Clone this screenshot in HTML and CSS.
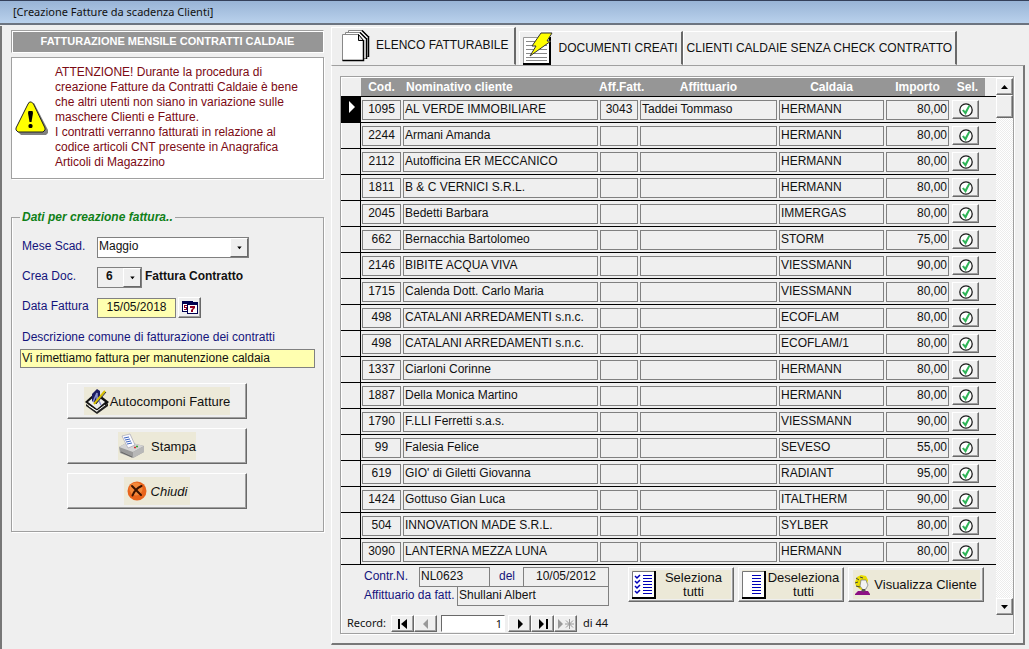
FILE: index.html
```html
<!DOCTYPE html>
<html lang="it">
<head>
  <meta charset="UTF-8" />
  <meta name="viewport" content="width=device-width, initial-scale=1.0"/>
  <title>Creazione Fatture da scadenza Clienti</title>
  <link rel="stylesheet" href="styles.css">
</head>
<body>

  <svg class="defs" aria-hidden="true">
    <symbol id="check" viewBox="0 0 14 14">
      <circle cx="7" cy="7" r="6.2" fill="#fff" stroke="#1c1c1c" stroke-width="1.3"/>
      <path d="M3 7.4l1.8-.8 1.3 1.7L9.6 2.2l1.6.8-4.500 9z" fill="#2fb457"/>
    </symbol>
    <symbol id="down" viewBox="0 0 7 4">
      <path d="M0 0h7L3.5 4z"/>
    </symbol>
  </svg>

  <header class="titlebar">[Creazione Fatture da scadenza Clienti]</header>

  <main>
    <section class="side">
      <h1>FATTURAZIONE MENSILE CONTRATTI CALDAIE</h1>

      <div class="warning">
        <svg width="34" height="34" viewBox="0 0 34 34">
          <path d="M17 3l2-1 14 27v3l-2 2H6l-3-3z" fill="#808080"/>
          <path d="M14.5 1h2l2 2L30 27v2l-2 2H3l-2-2v-2L13 3z" fill="#ff0" stroke="#222" stroke-width="1"/>
          <path d="M13.500 10h4l.5 2-1.500 9h-2L13 12z"/>
          <rect x="13.500" y="23" width="4" height="4" rx="1.500"/>
        </svg>
        <p>ATTENZIONE! Durante la procedura di<br>
          creazione Fatture da Contratti Caldaie è bene<br>
          che altri utenti non siano in variazione sulle<br>
          maschere Clienti e Fatture.<br>
          I contratti verranno fatturati in relazione al<br>
          codice articoli CNT presente in Anagrafica<br>
          Articoli di Magazzino</p>
      </div>

      <fieldset class="dati">
        <legend>Dati per creazione fattura..</legend>

        <div class="field">
          <label for="mese">Mese Scad.</label>
          <span class="combo combo-mese">
            <select id="mese"><option>Maggio</option></select>
            <svg width="18" height="18" viewBox="0 0 18 18"><path d="M7 8h5L9.500 11z"/></svg>
          </span>
        </div>
        <div class="field">
          <label for="doc">Crea Doc.</label>
          <span class="combo combo-doc">
            <select id="doc"><option>6</option></select>
            <svg width="18" height="18" viewBox="0 0 18 18"><path d="M7 8h5L9.500 11z"/></svg>
          </span>
          <strong>Fattura Contratto</strong>
        </div>
        <div class="field">
          <label for="data">Data Fattura</label>
          <input id="data" class="box yellow date" type="text" value="15/05/2018">
          <button class="raised cal" type="button" aria-label="Calendario">
            <svg width="16" height="15" viewBox="0 0 16 15">
              <path d="M0 1h11v11H0z" fill="#000050"/>
              <path d="M1 4h5v7H1z" fill="#fff"/>
              <path d="M2 5h3v1H3v1h2v3H2V9h2V8H2z" fill="#900020"/>
              <path d="M5 2h11v12H5z" fill="#000050"/>
              <path d="M6 5h9v8H6z" fill="#fff"/>
              <path d="M8 6h5v2l-2 2v2H9v-2l2-2H8z" fill="#900020"/>
            </svg>
          </button>
        </div>
        <label class="desc-label" for="desc">Descrizione comune di fatturazione dei contratti</label>
        <input id="desc" class="box yellow desc" type="text" value="Vi rimettiamo fattura per manutenzione caldaia">

        <div class="actions">
          <button class="raised big" type="button">
            <span class="face">
              <svg width="26" height="26" viewBox="0 0 26 26">
                <path d="M1 14L12 4l13 10-11 10z" fill="#111"/>
                <path d="M4 14l8-7 9 7-8 7z" fill="#eee"/>
                <path d="M2 16l11 8 11-9v3L13 26 2 18z" fill="#222"/>
                <path d="M5 18l8 5 8-6" fill="none" stroke="#fff" stroke-width="1"/>
                <path d="M8 6l5-5 3 2v8l-4 5-4-3z" fill="#1c1c60"/>
                <path d="M9 14l4-9v8M13 9l4 8" fill="none" stroke="#8890d0" stroke-width="1.500"/>
                <path d="M10 16L21 3" stroke="#d8c000" stroke-width="2"/>
                <path d="M12 16L22 4" stroke="#333" stroke-width="1"/>
              </svg>Autocomponi Fatture
            </span>
          </button>
          <button class="raised big" type="button">
            <span class="face stampa">
              <svg width="28" height="26" viewBox="0 0 28 26">
                <path d="M1 14l9-5 16 4v6l-11 6L2 20z" fill="#9a9a9a"/>
                <path d="M1 14l9-5 16 4-11 6z" fill="#d4d4d4"/>
                <path d="M15 19l11-6v6l-11 6z" fill="#b8b8b8"/>
                <path d="M4 3l8-2 5 11-7 3z" fill="#fafaff" stroke="#99a" stroke-width=".6"/>
                <path d="M6 5l5-1M7 7l5-1M8 9l5-1M9 11l5-1" stroke="#4068c0" stroke-width="1"/>
                <path d="M18 13.500h2" stroke="#30a030" stroke-width="1.500"/>
                <path d="M16 14.500h2" stroke="#d03030" stroke-width="1.500"/>
                <path d="M3 19l11 5" stroke="#666" stroke-width="1"/>
              </svg>Stampa
            </span>
          </button>
          <button class="raised big" type="button">
            <span class="face chiudi">
              <svg width="20" height="20" viewBox="0 0 20 20">
                <circle cx="10" cy="10" r="9.500" fill="#e8641c"/>
                <circle cx="9" cy="8" r="6.500" fill="#f5893a"/>
                <path d="M5 5q3 3 9 9M14.500 5Q8 8 5.500 14.500" fill="none" stroke="#3a1200" stroke-width="2" stroke-linecap="round"/>
              </svg>Chiudi
            </span>
          </button>
        </div>
      </fieldset>
    </section>

    <section class="content">
      <nav class="tabs">
        <button class="tab active" type="button">
          <svg width="28" height="33" viewBox="0 0 28 33">
            <path d="M6.500 1.500h14l6 6v20h-20z" fill="#fff" stroke="#888"/>
            <path d="M3.500 3.500h15l6 6v20h-21z" fill="#fff" stroke="#888"/>
            <path d="M.5 5.500h16l5 6v20H.5z" fill="#fff" stroke="#888"/>
            <path d="M21.500 11v20.500H.5M24.500 9v21M26.500 7v21" fill="none" stroke="#000" stroke-width="1.500"/>
            <path d="M20 1.500l6 6M18 3.500l6 6" stroke="#000" stroke-width="1.500"/>
            <path d="M16.500 5.500l5 6h-5z" fill="#ddd" stroke="#000"/>
          </svg>
          ELENCO FATTURABILE
        </button>
        <button class="tab" type="button">
          <svg width="30" height="33" viewBox="0 0 30 33">
            <path d="M1 5h26v27H1z" fill="#fff"/>
            <path d="M.5 32V5.500H27" fill="none" stroke="#999"/>
            <path d="M0 32h27V5" fill="none" stroke="#000" stroke-width="2"/>
            <path d="M3 9.500h21M3 13.500h21M3 17.500h21M3 21.500h21M3 25.500h21M3 28.500h21" stroke="#888"/>
            <path d="M18 1h11l-5 8h4L7 24l6-10H9z" fill="#ff0" stroke="#333"/>
          </svg>
          DOCUMENTI CREATI
        </button>
        <button class="tab" type="button">CLIENTI CALDAIE SENZA CHECK CONTRATTO</button>
      </nav>

      <div class="pane">
        <div class="subform">
          <div class="sheet">
            <div class="sheet-main">
              <table>
                <colgroup>
                  <col class="c-rec"><col class="c-cod"><col><col class="c-af"><col class="c-aff">
                  <col class="c-cal"><col class="c-imp"><col class="c-sel"><col class="c-end">
                </colgroup>
                <thead>
                  <tr><td></td><th>Cod.</th><th class="left">Nominativo cliente</th><th class="aff-fatt">Aff.Fatt.</th><th>Affittuario</th><th>Caldaia</th><th>Importo</th><th>Sel.</th><td></td></tr>
                </thead>
                <tbody id="rows"></tbody>
              </table>

              <div class="detail">
                <div class="detail-fields">
                  <div class="line">
                    <label for="contr">Contr.N.</label>
                    <input id="contr" class="box" type="text" value="NL0623" readonly>
                    <label for="del">del</label>
                    <input id="del" class="box date" type="text" value="10/05/2012" readonly>
                  </div>
                  <div class="line">
                    <label for="aff">Affittuario da fatt.</label>
                    <input id="aff" class="box" type="text" value="Shullani Albert" readonly>
                  </div>
                </div>
                <button class="raised tool" type="button">
                  <span class="face">
                    <svg width="24" height="28" viewBox="0 0 24 28">
                      <path d="M.5 .5h22v26H.5z" fill="#fff" stroke="#777"/>
                      <path d="M0 27h23V0" fill="none" stroke="#000" stroke-width="2"/>
                      <path d="M11 4.500h9M11 7.500h9M11 10.500h9M11 13.500h9M11 16.500h9M11 19.500h9M11 22.500h9" stroke="#0000b8"/>
                      <path d="M3 5l2 2 3-3M3 10l2 2 3-3M3 15l2 2 3-3M3 20l2 2 3-3" fill="none" stroke="#0000b8" stroke-width="1.500"/>
                    </svg>
                    <span>Seleziona<br>tutti</span>
                  </span>
                </button>
                <button class="raised tool" type="button">
                  <span class="face">
                    <svg width="24" height="28" viewBox="0 0 24 28">
                      <path d="M.5 .5h22v26H.5z" fill="#fff" stroke="#777"/>
                      <path d="M0 27h23V0" fill="none" stroke="#000" stroke-width="2"/>
                      <path d="M10 4.500h9M10 7.500h9M10 10.500h9M10 13.500h9M10 16.500h9M10 19.500h9M10 22.500h9" stroke="#0000b8"/>
                    </svg>
                    <span>Deseleziona<br>tutti</span>
                  </span>
                </button>
                <button class="raised tool cliente" type="button">
                  <span class="face">
                    <svg width="18" height="20" viewBox="0 0 18 20">
                      <path d="M4 2l4-2 5 1 2 4-2 8-5 2-5-4-1-4z" fill="#e8dc00"/>
                      <path d="M3 3l3 2M2 8l3-1M3 11l4 1M7 2l3 1" stroke="#444" stroke-width="1"/>
                      <path d="M8 5h5l1 3 1 2-2 4-3 1-3-4z" fill="#f2f2f2" stroke="#777" stroke-width=".7"/>
                      <path d="M9 14h3l1 3H8z" fill="#555"/>
                      <path d="M2 19l3-3h4l1 1 2-1h3l2 3v1H2z" fill="#8c1084"/>
                    </svg>
                    <span>Visualizza Cliente</span>
                  </span>
                </button>
              </div>
            </div>

            <div class="scrollbar">
              <button class="raised arrow" type="button" aria-label="Su"><svg class="flip" width="7" height="4"><use href="#down"/></svg></button>
              <div class="raised thumb"></div>
              <button class="raised arrow last" type="button" aria-label="Giù"><svg width="7" height="4"><use href="#down"/></svg></button>
            </div>
          </div>

          <div class="recordnav">
            <label for="rec">Record:</label>
            <button class="raised" type="button" aria-label="Primo"><svg width="12" height="10" viewBox="0 0 12 10"><path d="M1 0h2v10H1zM10 0v10L4 5z"/></svg></button>
            <button class="raised" type="button" aria-label="Precedente"><svg width="12" height="10" viewBox="0 0 12 10"><path d="M8 0v10L3 5z" fill="#999"/></svg></button>
            <input id="rec" type="text" value="1">
            <button class="raised" type="button" aria-label="Successivo"><svg width="12" height="10" viewBox="0 0 12 10"><path d="M4 0v10l5-5z"/></svg></button>
            <button class="raised" type="button" aria-label="Ultimo"><svg width="12" height="10" viewBox="0 0 12 10"><path d="M2 0v10l5-5zM9 0h2v10H9z"/></svg></button>
            <button class="raised" type="button" aria-label="Nuovo"><svg width="18" height="10" viewBox="0 0 18 10"><path d="M1 0v10l5-5z" fill="#999"/><path d="M12.500 0v10M8 5h9M9 1.500l7 7M16 1.500l-7 7" stroke="#999"/></svg></button>
            <span>di 44</span>
          </div>
        </div>
      </div>
    </section>
  </main>

  <script src="rows.js"></script>

</body>
</html>
```
FILE: styles.css
```css
* {
  box-sizing: border-box;
}
body {
  margin: 0;
  min-height: 100vh;
  display: flex;
  flex-direction: column;
  background-color: #efefef;
  color: #111;
  font-family: "Liberation Sans", Arial, sans-serif;
  font-size: 12px;
  line-height: 15px;
}
button, input, select {
  font: inherit;
  color: inherit;
  margin: 0;
  padding: 0;
  border-radius: 0;
}
svg {
  display: block;
  flex: none;
}
.defs {
  position: absolute;
  width: 0;
  height: 0;
}
.titlebar {
  height: 25px;
  padding: 0 13px;
  border-top: 1px solid #34405a;
  border-bottom: 2px solid #6c7480;
  background: linear-gradient(#98b4d6, #b9d1ec);
  font-family: "Noto Sans", sans-serif;
  font-size: 11px;
  line-height: 22px;
}
main {
  flex: 1;
  display: flex;
  padding-top: 1px;
}

/* pulsanti in rilievo */
.raised {
  background-color: #efefef;
  border: 1px solid;
  border-color: #fff #696969 #696969 #fff;
  box-shadow: inset -1px -1px #a0a0a0;
}
button.raised {
  display: flex;
  align-items: center;
  justify-content: center;
}
.face {
  display: flex;
  align-items: center;
  background-color: #ece9d8;
  font-size: 13px;
}

/* pannello sinistro */
.side {
  width: 331px;
  padding: 4px 7px 0 9px;
  border-left: 2px solid #777;
}
h1 {
  margin: 0 0 4px;
  height: 23px;
  border: 1px solid;
  border-color: #a0a0a0 #fff #fff #a0a0a0;
  box-shadow: inset 1px 1px #fff;
  background-color: #969696;
  color: #fff;
  font-size: 11px;
  line-height: 20px;
  text-align: center;
}
.warning {
  display: flex;
  align-items: center;
  gap: 6px;
  padding: 7px 3px 8px;
  border: 1px solid #a0a0a0;
  background-color: #fff;
  box-shadow: 1px 1px #fff;
}
.warning p {
  margin: 0;
  color: #7b0a14;
  white-space: nowrap;
}
.dati {
  margin: 31px 0 0;
  height: 322px;
  padding: 12px 8px 0;
  border: 1px solid #a0a0a0;
  box-shadow: 1px 1px #fff, inset 1px 0 #fff;
}
.dati legend {
  padding: 0 2px;
  color: #108018;
  font-weight: bold;
  font-style: italic;
}
.dati label, .detail label {
  color: #14147c;
}
.field {
  display: flex;
  align-items: center;
  height: 21px;
  margin-bottom: 9px;
}
.field label {
  width: 77px;
  padding-left: 2px;
  padding-bottom: 3px;
}
.field strong {
  margin-left: 3px;
  padding-bottom: 3px;
}
.box {
  height: 20px;
  padding: 0 1px 2px;
  border: 1px solid #808080;
  background-color: #efefef;
}
.yellow {
  background-color: #ffffb0;
}
.date {
  width: 79px;
  text-align: center;
}
.combo {
  display: grid;
  grid-template-columns: 1fr 18px;
  height: 21px;
  border: 1px solid #808080;
}
.combo select {
  grid-area: 1 / 1 / 2 / 3;
  appearance: none;
  border: none;
  padding: 0 1px 2px;
  background: none;
}
.combo svg {
  grid-area: 1 / 2;
  align-self: stretch;
  background-color: #efefef;
  border: 1px solid;
  border-color: #fff #696969 #696969 #fff;
  height: 19px;
  pointer-events: none;
}
.combo-mese {
  width: 152px;
  background-color: #fff;
}
.combo-doc {
  width: 45px;
}
.combo-doc select {
  padding-left: 8px;
  font-weight: bold;
}
.cal {
  width: 23px;
  height: 21px;
  margin-left: 2px;
}
.desc-label {
  display: block;
  padding: 3px 2px 4px;
}
.desc {
  display: block;
  width: 100%;
  height: 19px;
}
.actions {
  display: grid;
  gap: 9px;
  width: 180px;
  margin: 15px auto 0 47px;
}
.big {
  height: 36px;
}
.big .face {
  height: 28px;
}
.big .stampa {
  gap: 5px;
}
.big .chiudi {
  gap: 4px;
  padding: 0 3px;
  font-style: italic;
}

/* schede */
.content {
  flex: 1;
  min-width: 0;
  display: flex;
  flex-direction: column;
  padding: 1px 4px 5px 0;
}
.tabs {
  display: flex;
  align-items: flex-end;
  height: 38px;
}
.tab {
  display: flex;
  align-items: center;
  gap: 5px;
  height: 34px;
  padding: 0 3px;
  border: 1px solid;
  border-color: #fff #696969 transparent #fff;
  border-right-width: 2px;
  background-color: #efefef;
  white-space: nowrap;
}
.tab.active {
  height: 38px;
  padding: 0 6px 2px 10px;
  gap: 6px;
  margin-right: 3px;
}
.pane {
  flex: 1;
  padding: 10px 9px 9px 8px;
  border: 1px solid;
  border-color: #a0a0a0 #777 #777 #fff;
  border-right-width: 2px;
  border-bottom-width: 2px;
}
.subform {
  border: 1px solid #a0a0a0;
  box-shadow: 1px 1px #fff, inset 1px 1px #fff;
  padding-top: 1px;
}

/* elenco */
.sheet {
  display: flex;
}
.sheet-main {
  flex: 1;
  min-width: 0;
}
table {
  width: 100%;
  table-layout: fixed;
  border-spacing: 0;
}
.c-rec { width: 20px; }
.c-cod { width: 41px; }
.c-af { width: 40px; }
.c-aff { width: 139px; }
.c-cal { width: 107px; }
.c-imp { width: 65px; }
.c-sel { width: 35px; }
.c-end { width: 11px; }
td, th {
  height: 26px;
  padding: 2px 1px;
  border-bottom: 1px solid #000;
  white-space: nowrap;
}
thead td, thead th {
  height: 19px;
  padding: 0;
}
th {
  background-color: #969696;
  color: #fff;
  line-height: 16px;
}
th.left {
  padding-left: 4px;
  text-align: left;
}
th.aff-fatt {
  padding-right: 6px;
}
tbody td:first-child {
  border-right: 1px solid #000;
}
tbody tr:first-child td:first-child {
  background-color: #000;
}
.cell {
  display: block;
  height: 20px;
  padding: 0 1px;
  border: 1px solid #808080;
  line-height: 16px;
  overflow: hidden;
}
.center {
  text-align: center;
}
.right {
  text-align: right;
}
td .raised {
  width: 27px;
  height: 19px;
  margin-left: 1px;
}

.detail {
  display: flex;
  align-items: flex-start;
  gap: 4px;
  padding: 2px 12px 0 23px;
}
.detail-fields {
  width: 245px;
  margin-right: auto;
}
.line {
  display: flex;
}
.line + .line {
  margin-top: -1px;
}
.line label {
  flex: none;
  padding-top: 2px;
}
#contr {
  width: 71px;
  margin-left: 11px;
  margin-right: 9px;
}
#del {
  width: 86px;
  margin-left: auto;
}
#aff {
  width: 152px;
  margin-left: auto;
}
.tool {
  width: 106px;
  height: 35px;
}
.tool .face {
  height: 29px;
  gap: 1px;
  line-height: 14px;
}
.tool .face > span {
  width: 74px;
  text-align: center;
}
.cliente {
  width: 136px;
}
.cliente .face > span {
  width: 108px;
  white-space: nowrap;
}

.scrollbar {
  display: flex;
  flex-direction: column;
  width: 17px;
  height: 537px;
  background: repeating-conic-gradient(#fff 0 25%, #ececec 0 50%) 0 0 / 2px 2px;
}
.arrow {
  height: 17px;
}
.last {
  margin-top: auto;
}
.thumb {
  height: 23px;
}
.flip {
  transform: rotate(180deg);
}

.recordnav {
  display: flex;
  height: 18px;
  padding-left: 6px;
  font-family: "Noto Sans", sans-serif;
  font-size: 11px;
}
.recordnav label {
  width: 44px;
}
.recordnav button {
  width: 23px;
  height: 17px;
}
.recordnav input {
  width: 64px;
  height: 17px;
  margin: 0 3px 0 4px;
  padding-right: 2px;
  border: 1px solid;
  border-color: #696969 #fff #fff #696969;
  background-color: #fff;
  text-align: right;
}
.recordnav span {
  margin-left: 6px;
}
```
FILE: rows.js
```js
const clienti = [
  ["1095", "AL VERDE IMMOBILIARE", "3043", "Taddei Tommaso", "HERMANN", "80,00"],
  ["2244", "Armani Amanda", "", "", "HERMANN", "80,00"],
  ["2112", "Autofficina ER MECCANICO", "", "", "HERMANN", "80,00"],
  ["1811", "B & C VERNICI S.R.L.", "", "", "HERMANN", "80,00"],
  ["2045", "Bedetti Barbara", "", "", "IMMERGAS", "80,00"],
  ["662", "Bernacchia Bartolomeo", "", "", "STORM", "75,00"],
  ["2146", "BIBITE ACQUA VIVA", "", "", "VIESSMANN", "90,00"],
  ["1715", "Calenda Dott. Carlo Maria", "", "", "VIESSMANN", "80,00"],
  ["498", "CATALANI ARREDAMENTI s.n.c.", "", "", "ECOFLAM", "80,00"],
  ["498", "CATALANI ARREDAMENTI s.n.c.", "", "", "ECOFLAM/1", "80,00"],
  ["1337", "Ciarloni Corinne", "", "", "HERMANN", "80,00"],
  ["1887", "Della Monica Martino", "", "", "HERMANN", "80,00"],
  ["1790", "F.LLI Ferretti s.a.s.", "", "", "VIESSMANN", "90,00"],
  ["99", "Falesia Felice", "", "", "SEVESO", "55,00"],
  ["619", "GIO' di Giletti Giovanna", "", "", "RADIANT", "95,00"],
  ["1424", "Gottuso Gian Luca", "", "", "ITALTHERM", "90,00"],
  ["504", "INNOVATION MADE S.R.L.", "", "", "SYLBER", "80,00"],
  ["3090", "LANTERNA MEZZA LUNA", "", "", "HERMANN", "80,00"]
];
const classi = ["center", "", "center", "", "", "right"];

document.getElementById("rows").innerHTML = clienti.map((riga, index) => {
  const celle = riga.map((valore, i) =>
    `<td><span class="cell ${classi[i]}">${valore.replace("&", "&amp;")}</span></td>`).join("");
  const freccia = index === 0
    ? '<svg width="18" height="20" viewBox="0 0 18 20"><path d="M7 1v12l6-6z" fill="#fff"/></svg>' : "";
  return `<tr><td>${freccia}</td>${celle}
    <td><button class="raised" type="button" aria-label="Seleziona"><svg width="14" height="14"><use href="#check"/></svg></button></td>
    <td></td></tr>`;
}).join("");
```
